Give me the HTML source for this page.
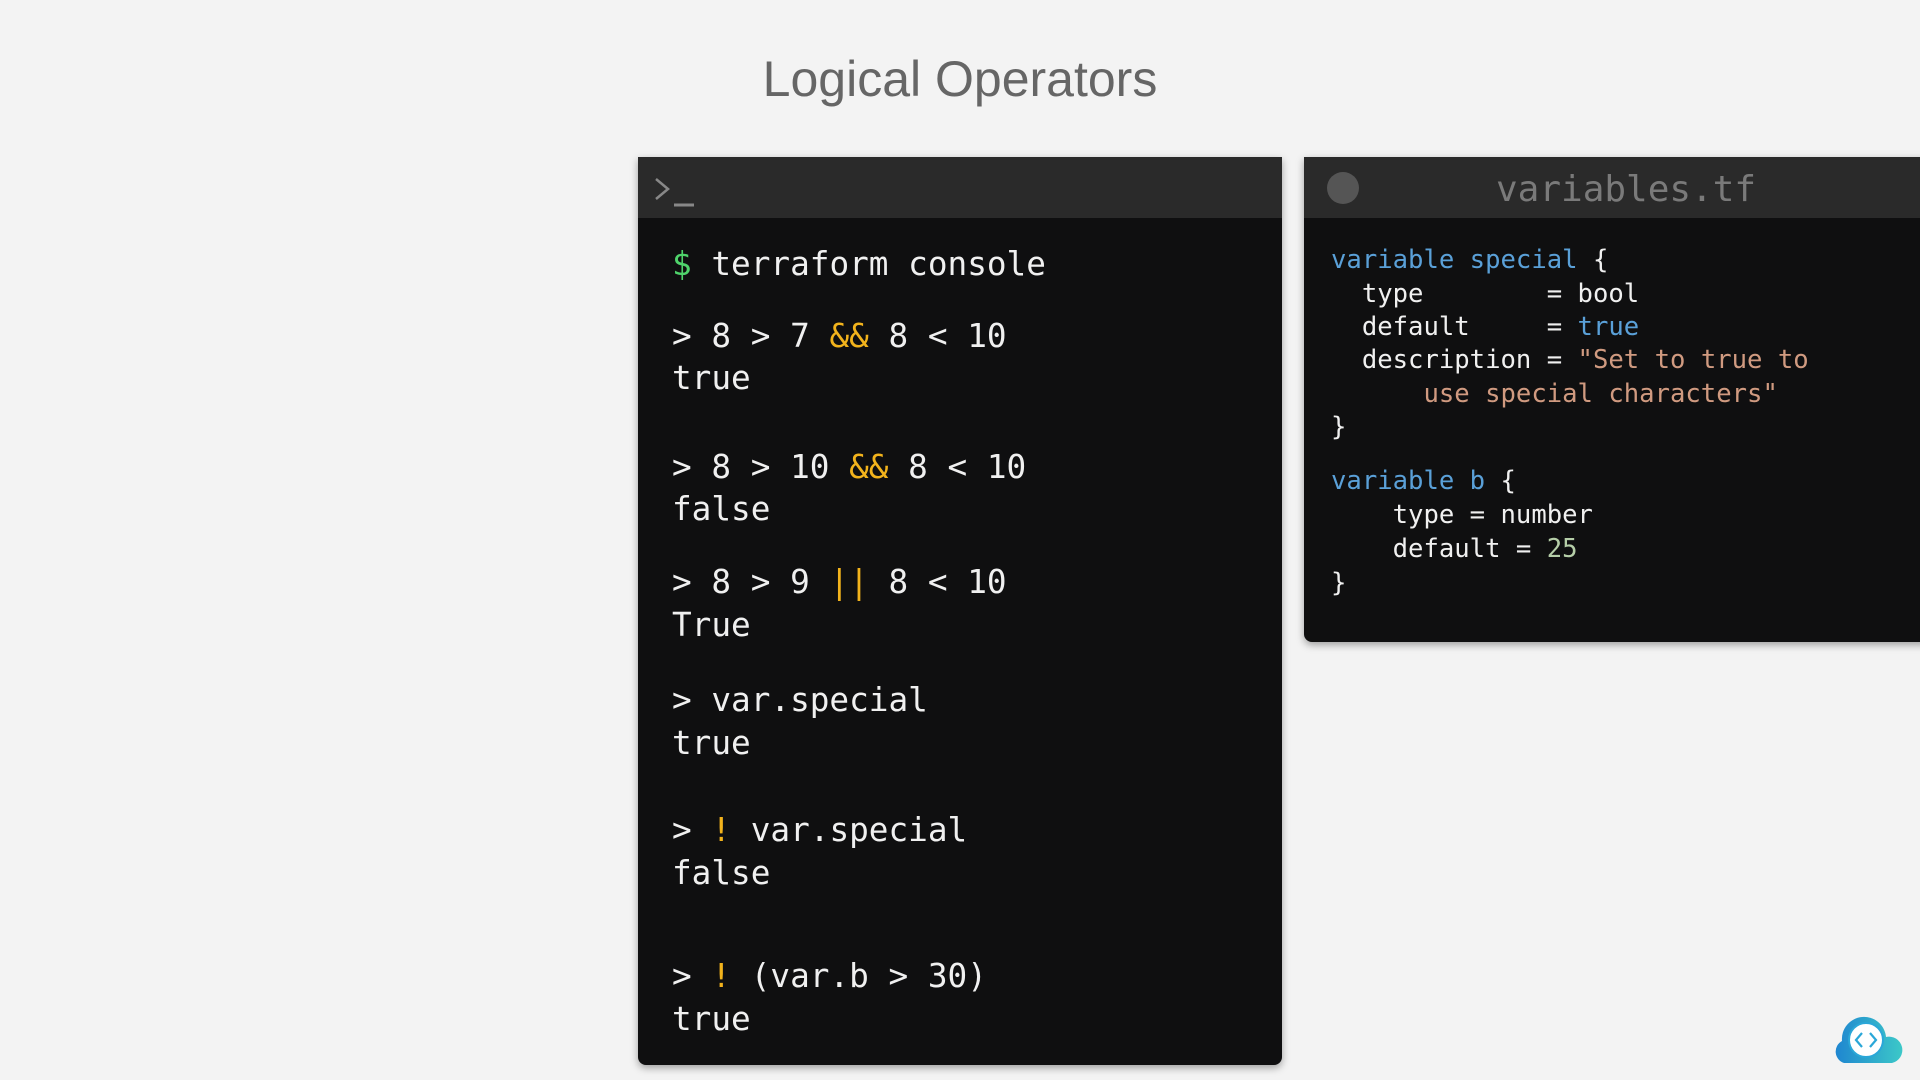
<!DOCTYPE html>
<html><head><meta charset="utf-8"><style>
html,body{margin:0;padding:0;width:1920px;height:1080px;overflow:hidden;background:#f3f3f3;font-family:"Liberation Sans",sans-serif;}
.t{position:absolute;font-family:"DejaVu Sans Mono","Liberation Mono",monospace;white-space:pre;color:#f0f0f0;line-height:1;}
.term{position:absolute;left:638px;top:157px;width:644px;height:908px;background:#0f0f10;border-radius:0 0 8px 8px;box-shadow:0 3px 8px rgba(0,0,0,.35);}
.th{position:absolute;left:0;top:0;width:100%;height:61px;background:#2a2a2a;}
.code{position:absolute;left:1304px;top:157px;width:630px;height:485px;background:#0f0f10;border-radius:0 0 8px 8px;box-shadow:0 3px 8px rgba(0,0,0,.35);}
.y{color:#f2b31c}.g{color:#4fd36b}.b{color:#5aa0d8}.s{color:#d09a80}.n{color:#b5cea8}
.tl .t{font-size:32.7px;left:34px;}
.cl .t{font-size:25.6px;}
</style></head><body>
<div style="position:absolute;left:0;top:50px;width:1920px;text-align:center;font-size:50px;color:#666;">Logical Operators</div>

<div class="term tl">
<div class="th"></div>
<svg style="position:absolute;left:16px;top:20px" width="44" height="32"><path d="M2 2 L14 12 L2 22" stroke="#888" stroke-width="2.5" fill="none"/><path d="M20 28 H40" stroke="#888" stroke-width="3"/></svg>
<div class="t" style="top:91px"><span class="g">$</span> terraform console</div>
<div class="t" style="top:163px">&gt; 8 &gt; 7 <span class="y">&amp;&amp;</span> 8 &lt; 10</div>
<div class="t" style="top:205px">true</div>
<div class="t" style="top:294px">&gt; 8 &gt; 10 <span class="y">&amp;&amp;</span> 8 &lt; 10</div>
<div class="t" style="top:336px">false</div>
<div class="t" style="top:409px">&gt; 8 &gt; 9 <span class="y">||</span> 8 &lt; 10</div>
<div class="t" style="top:452px">True</div>
<div class="t" style="top:527px">&gt; var.special</div>
<div class="t" style="top:570px">true</div>
<div class="t" style="top:657px">&gt; <span class="y">!</span> var.special</div>
<div class="t" style="top:700px">false</div>
<div class="t" style="top:803px">&gt; <span class="y">!</span> (var.b &gt; 30)</div>
<div class="t" style="top:846px">true</div>
</div>

<div class="code cl">
<div class="th"></div>
<div style="position:absolute;left:23px;top:15px;width:32px;height:32px;border-radius:50%;background:#555;"></div>
<div class="t" style="left:300px;top:15px;font-size:36px;color:#7a7a7a;width:0;"><span style="position:relative;left:-108px">variables.tf</span></div>
<div class="t" style="left:27px;top:91px"><span class="b">variable special</span> {</div>
<div class="t" style="left:27px;top:125px">  type        = bool</div>
<div class="t" style="left:27px;top:158px">  default     = <span class="b">true</span></div>
<div class="t" style="left:27px;top:191px">  description = <span class="s">"Set to true to</span></div>
<div class="t" style="left:27px;top:225px"><span class="s">      use special characters"</span></div>
<div class="t" style="left:27px;top:258px">}</div>
<div class="t" style="left:27px;top:312px"><span class="b">variable b</span> {</div>
<div class="t" style="left:27px;top:346px">    type = number</div>
<div class="t" style="left:27px;top:380px">    default = <span class="n">25</span></div>
<div class="t" style="left:27px;top:414px">}</div>
</div>

<svg style="position:absolute;left:1830px;top:1015px" width="76" height="50" viewBox="0 0 76 50">
<defs><linearGradient id="gr" x1="0" x2="1"><stop offset="0" stop-color="#1f86d0"/><stop offset="1" stop-color="#3cc8c8"/></linearGradient></defs>
<path d="M14 48 A12 12 0 0 1 12 26 A22 22 0 0 1 56 22 A13 13 0 0 1 62 48 Z" fill="url(#gr)"/>
<circle cx="36" cy="25" r="17" fill="#fff" stroke="#2aa7d8" stroke-width="2"/>
<path d="M32 18 L26 25 L32 32 M40 18 L46 25 L40 32" stroke="#2aa7d8" stroke-width="2.2" fill="none"/>
</svg>
</body></html>
